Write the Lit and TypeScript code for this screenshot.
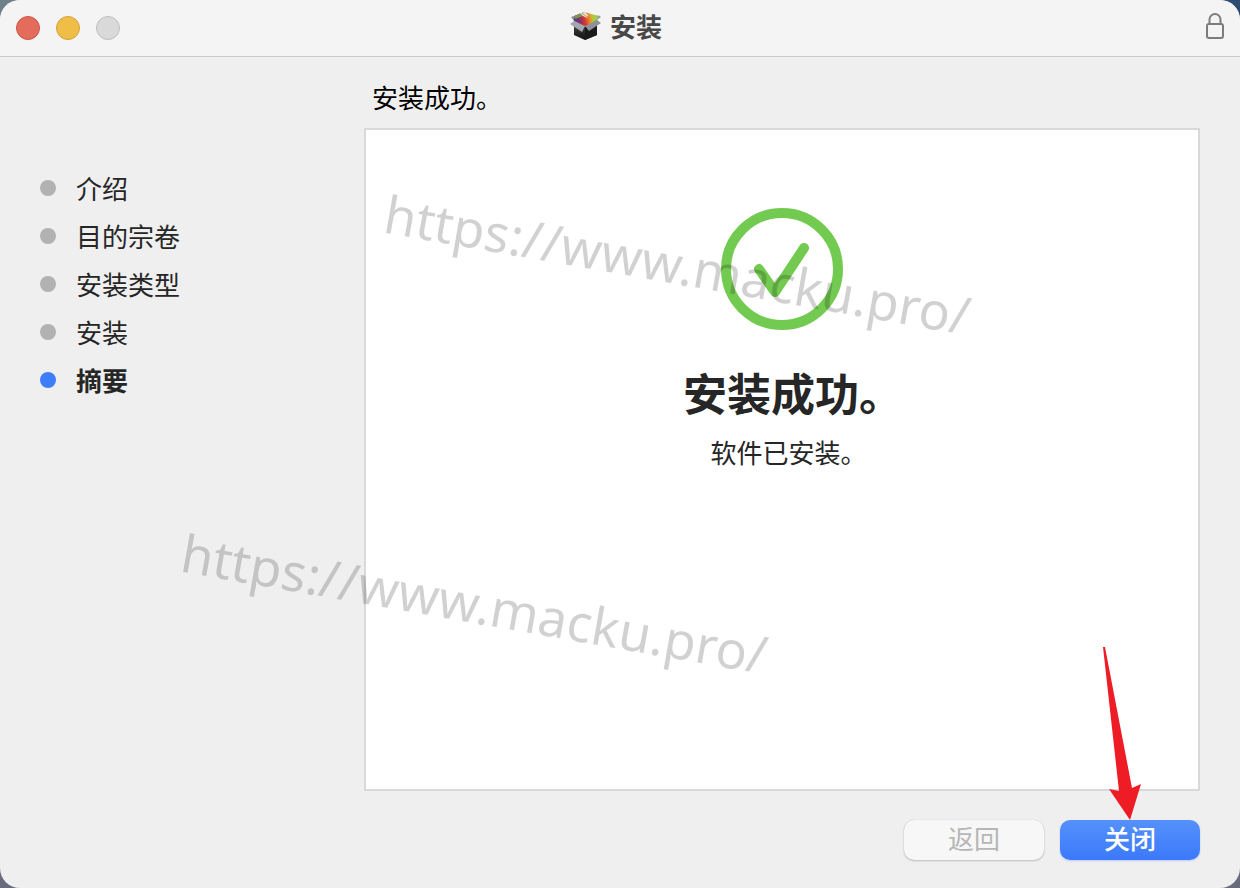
import { LitElement, html, css, svg } from "lit";
import { customElement, state } from "lit/decorators.js";
import { classMap } from "lit/directives/class-map.js";

const packageIcon = svg`
  <defs>
    <linearGradient id="rainbow" x1="0" y1="0.5" x2="1" y2="0.4">
      <stop offset="0" stop-color="#4a3d9c" />
      <stop offset="0.25" stop-color="#8c2f68" />
      <stop offset="0.45" stop-color="#d63a2c" />
      <stop offset="0.65" stop-color="#ee8a25" />
      <stop offset="0.82" stop-color="#b5cf36" />
      <stop offset="1" stop-color="#6db43c" />
    </linearGradient>
    <linearGradient id="box" x1="0" y1="0" x2="0" y2="1">
      <stop offset="0" stop-color="#444" />
      <stop offset="1" stop-color="#111" />
    </linearGradient>
  </defs>
  <path d="M4 14 L15 16 L27 13 L27 24 L15 29 L4 24Z" fill="url(#box)" />
  <path d="M15 16 L27 13 L27 24 L15 29Z" fill="#1b1b1b" />
  <path d="M4 5 L14 1 L28 5 L27 10 L15 16 L4 10Z" fill="url(#rainbow)" />
  <path d="M4 5 L12 2 L13 5 L5 8Z" fill="#7d9a4a" />
  <path d="M20 3 L28 5 L27 9 L22 7Z" fill="#a5cc42" />
  <path d="M10 2 L15 1 L18 4 L17 7 L13 5Z" fill="#e9e5d4" />
  <path d="M12 2 L17 6" stroke="#8d8467" stroke-width="0.8" />
  <path d="M4 10 L15 15 L12 21 L0 13Z" fill="#a4a8ad" />
  <path d="M15 15 L27 9 L31 12 L19 20Z" fill="#8d9299" />
  <path d="M4 10 L1 6 L4 5Z" fill="#8b8f95" />
  <path d="M27 9 L31 6 L28 4Z" fill="#999da2" />
`;

interface Step {
  label: string;
  current: boolean;
}

@customElement("app-root")
export class AppRoot extends LitElement {
  @state() private steps: Step[] = [
    { label: "介绍", current: false },
    { label: "目的宗卷", current: false },
    { label: "安装类型", current: false },
    { label: "安装", current: false },
    { label: "摘要", current: true },
  ];

  static styles = css`
    :host {
      display: block;
      background: linear-gradient(90deg, #6e818a, #2e4c6f) top / 100% 50% no-repeat, #676b7c;
      font-family: "Noto Sans CJK SC", sans-serif;
      font-size: 26px;
      line-height: 40px;
      color: #262626;
    }
    * {
      box-sizing: border-box;
    }
    .window {
      position: relative;
      display: flex;
      flex-direction: column;
      min-height: 100vh;
      border-radius: 20px;
      background: #efefef;
      overflow: hidden;
    }
    .titlebar {
      display: grid;
      grid-template-columns: 1fr auto 1fr;
      align-items: center;
      height: 57px;
      padding: 0 16px;
      background: #f4f4f4;
      border-bottom: 1px solid #cacaca;
    }
    .lights {
      display: flex;
      gap: 16px;
    }
    .light {
      width: 24px;
      height: 24px;
      padding: 0;
      border: 1px solid #cf5547;
      border-radius: 50%;
      background: #e46c5c;
    }
    .light.minimize {
      border-color: #d3a139;
      background: #f0be48;
    }
    .light.zoom {
      border-color: #bdbdbd;
      background: #d9d9d9;
    }
    .title {
      display: flex;
      align-items: center;
      gap: 8px;
      margin: 0;
      padding: 0 8px 4px 0;
      font-size: 26px;
      font-weight: 700;
      color: #484848;
    }
    .lock {
      display: flex;
      justify-self: end;
      padding-bottom: 4px;
    }
    svg {
      display: block;
    }
    .body {
      display: flex;
      flex: 1;
      padding: 20px 40px 28px;
    }
    .steps {
      flex: 0 0 324px;
      margin: 0;
      padding: 87px 0 0;
      list-style: none;
    }
    .step {
      display: flex;
      align-items: center;
      gap: 20px;
      height: 48px;
    }
    .step::before {
      content: "";
      width: 16px;
      height: 16px;
      border-radius: 50%;
      background: #b2b2b2;
    }
    .step.current {
      font-weight: 700;
    }
    .step.current::before {
      background: #3d7dfa;
    }
    .main {
      display: flex;
      flex: 1;
      flex-direction: column;
    }
    .heading {
      margin: 0 0 11px;
      padding-left: 8px;
      font-size: 26px;
      font-weight: 400;
      color: #000;
    }
    .panel {
      display: flex;
      flex: 1;
      flex-direction: column;
      align-items: center;
      padding-top: 78px;
      border: 2px solid #d9d9d9;
      background: #fff;
    }
    /* Half an em on the left offsets the blank half of the closing full stop. */
    .result,
    .detail {
      padding-left: 0.5em;
    }
    .result {
      margin: 30px 0 8px;
      font-size: 44px;
      line-height: 64px;
      font-weight: 700;
    }
    .detail {
      margin: 0;
    }
    .actions {
      display: flex;
      justify-content: flex-end;
      gap: 16px;
      padding-top: 29px;
    }
    .button {
      width: 140px;
      height: 40px;
      padding: 0 0 4px;
      border: 0;
      border-radius: 10px;
      font: inherit;
      line-height: 36px;
      color: #fff;
      background: linear-gradient(#5491fb, #3c79fb);
      box-shadow: 0 1px 2px #3c79fb4d;
      font-weight: 500;
    }
    .button:disabled {
      font-weight: 400;
      color: #b6b6b6;
      background: #f7f7f7;
      box-shadow: 0 0 1px #0003, 0 1px 2px #0003;
    }
    .anchor {
      position: relative;
      display: flex;
    }
    .arrow {
      position: absolute;
      right: 59px;
      bottom: 40px;
      pointer-events: none;
    }
    .watermark {
      position: absolute;
      font-family: "Noto Sans", sans-serif;
      font-size: 52px;
      line-height: 60px;
      white-space: nowrap;
      color: #0000002e;
      transform: rotate(10deg);
      transform-origin: 0 100%;
      pointer-events: none;
    }
    .watermark.upper {
      left: 380px;
      top: 182px;
    }
    .watermark.lower {
      left: 177px;
      top: 521px;
    }
  `;

  render() {
    return html`
      <div class="window">
        <header class="titlebar">
          <div class="lights">
            <button class="light" aria-label="关闭窗口"></button>
            <button class="light minimize" aria-label="最小化"></button>
            <button class="light zoom" aria-label="缩放" disabled></button>
          </div>
          <h1 class="title">
            <svg width="32" height="30" viewBox="0 0 32 30" aria-hidden="true">${packageIcon}</svg>
            安装
          </h1>
          <div class="lock">
            <svg width="18" height="26" viewBox="0 0 18 26" fill="none" stroke="#7c7c7c" stroke-width="2" aria-hidden="true">
              <rect x="1" y="11" width="16" height="14" rx="2" />
              <path d="M3.5 11V6.5a5.5 5.5 0 0 1 11 0V11" />
            </svg>
          </div>
        </header>
        <div class="body">
          <ol class="steps">
            ${this.steps.map(
              (s) => html`<li class=${classMap({ step: true, current: s.current })}>${s.label}</li>`
            )}
          </ol>
          <main class="main">
            <h2 class="heading">安装成功。</h2>
            <section class="panel">
              <svg width="122" height="122" viewBox="0 0 122 122" fill="none" stroke="#73ca50" aria-hidden="true">
                <circle cx="61" cy="61" r="56" stroke-width="10" />
                <path d="M38 61 L54 84 L83 40" stroke-width="10" stroke-linecap="round" stroke-linejoin="round" />
              </svg>
              <h3 class="result">安装成功。</h3>
              <p class="detail">软件已安装。</p>
            </section>
            <footer class="actions">
              <button class="button" disabled>返回</button>
              <div class="anchor">
                <button class="button">关闭</button>
                <svg class="arrow" width="38" height="173" viewBox="0 0 38 173" aria-hidden="true">
                  <path d="M0 0 H2 L29 141 L38 137 L27 173 L6 142 L16 144Z" fill="#ee1c25" />
                </svg>
              </div>
            </footer>
          </main>
        </div>
        <div class="watermark upper" aria-hidden="true">https://www.macku.pro/</div>
        <div class="watermark lower" aria-hidden="true">https://www.macku.pro/</div>
      </div>
    `;
  }
}
